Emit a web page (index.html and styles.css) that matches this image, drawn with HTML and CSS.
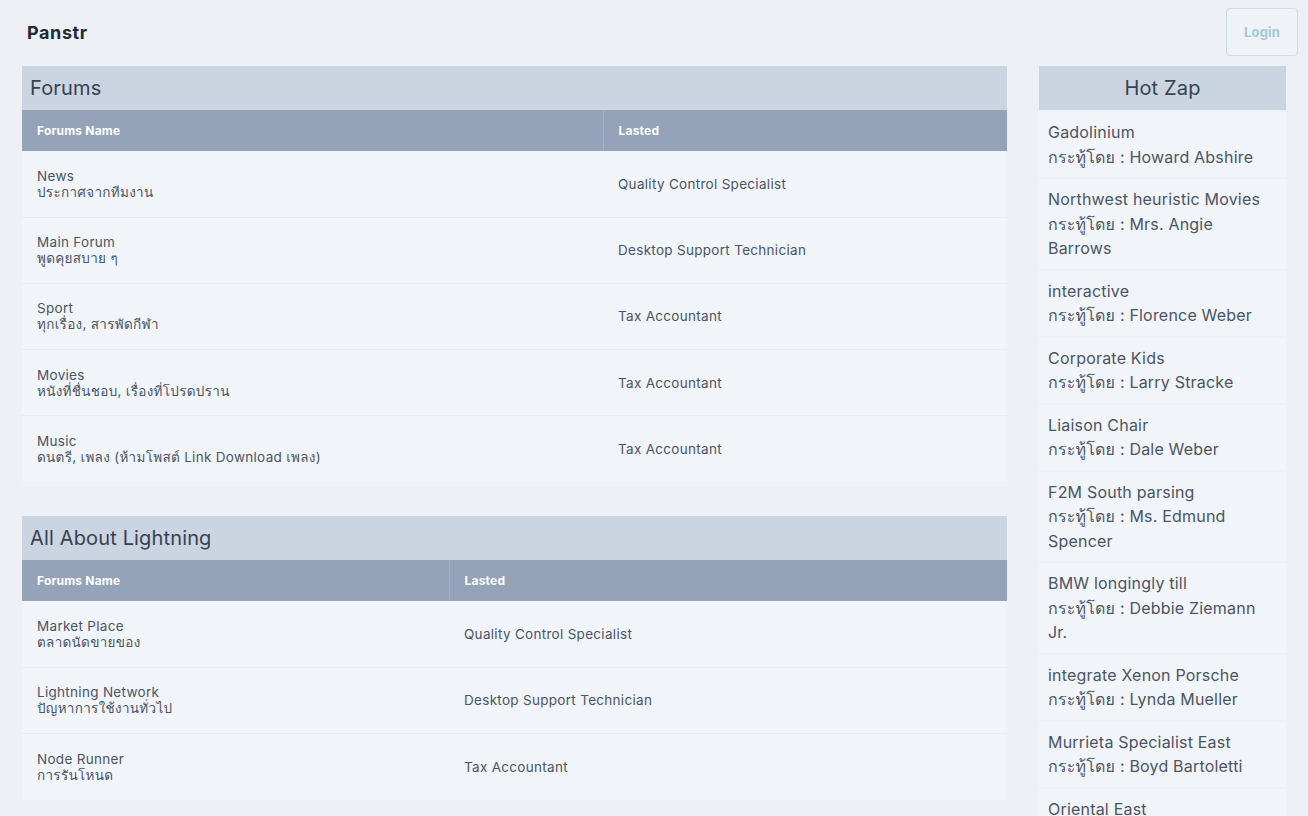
FILE: index.html
```html
<!DOCTYPE html>
<html lang="th">
<head>
<meta charset="utf-8">
<title>Panstr</title>
<link rel="stylesheet" href="styles.css">
</head>
<body>
<div class="app">
  <header class="topbar">
    <div class="brand">Panstr</div>
    <button class="login">Login</button>
  </header>
  <div class="layout">
    <main class="main">
      <section class="panel">
        <h2 class="panel-title">Forums</h2>
        <table class="forum-table">
          <colgroup><col class="col-a1"><col></colgroup>
          <thead><tr><th>Forums Name</th><th>Lasted</th></tr></thead>
          <tbody>
            <tr><td><div class="fname">News</div><div class="fdesc">ประกาศจากทีมงาน</div></td><td>Quality Control Specialist</td></tr>
            <tr><td><div class="fname">Main Forum</div><div class="fdesc">พูดคุยสบาย ๆ</div></td><td>Desktop Support Technician</td></tr>
            <tr><td><div class="fname">Sport</div><div class="fdesc">ทุกเรื่อง, สารพัดกีฬา</div></td><td>Tax Accountant</td></tr>
            <tr><td><div class="fname">Movies</div><div class="fdesc">หนังที่ชื่นชอบ, เรื่องที่โปรดปราน</div></td><td>Tax Accountant</td></tr>
            <tr><td><div class="fname">Music</div><div class="fdesc">ดนตรี, เพลง (ห้ามโพสต์ Link Download เพลง)</div></td><td>Tax Accountant</td></tr>
          </tbody>
        </table>
      </section>
      <section class="panel">
        <h2 class="panel-title">All About Lightning</h2>
        <table class="forum-table">
          <colgroup><col class="col-a2"><col></colgroup>
          <thead><tr><th>Forums Name</th><th>Lasted</th></tr></thead>
          <tbody>
            <tr><td><div class="fname">Market Place</div><div class="fdesc">ตลาดนัดขายของ</div></td><td>Quality Control Specialist</td></tr>
            <tr><td><div class="fname">Lightning Network</div><div class="fdesc">ปัญหาการใช้งานทั่วไป</div></td><td>Desktop Support Technician</td></tr>
            <tr><td><div class="fname">Node Runner</div><div class="fdesc">การรันโหนด</div></td><td>Tax Accountant</td></tr>
          </tbody>
        </table>
      </section>
    </main>
    <aside class="side">
      <h2 class="side-title">Hot Zap</h2>
      <ul class="zap-list">
        <li class="zap">Gadolinium<br>กระทู้โดย : Howard Abshire</li>
        <li class="zap">Northwest heuristic Movies<br>กระทู้โดย : Mrs. Angie Barrows</li>
        <li class="zap">interactive<br>กระทู้โดย : Florence Weber</li>
        <li class="zap">Corporate Kids<br>กระทู้โดย : Larry Stracke</li>
        <li class="zap">Liaison Chair<br>กระทู้โดย : Dale Weber</li>
        <li class="zap">F2M South parsing<br>กระทู้โดย : Ms. Edmund Spencer</li>
        <li class="zap">BMW longingly till<br>กระทู้โดย : Debbie Ziemann Jr.</li>
        <li class="zap">integrate Xenon Porsche<br>กระทู้โดย : Lynda Mueller</li>
        <li class="zap">Murrieta Specialist East<br>กระทู้โดย : Boyd Bartoletti</li>
        <li class="zap">Oriental East<br>กระทู้โดย : Kurt Lind</li>
      </ul>
    </aside>
  </div>
</div>
</body>
</html>
```

FILE: styles.css
```css
* { box-sizing: border-box; }
html, body { margin: 0; padding: 0; }
body {
  background: #edf0f5;
  font-family: "Inter", "Loma", "Garuda", "Waree", "Umpush", "Noto Sans Thai Looped", "Noto Sans Thai", "Noto Sans", sans-serif;
  color: #4b5563;
}
.app { min-height: 816px; }
.topbar {
  display: flex;
  align-items: center;
  justify-content: space-between;
  height: 56px;
  padding: 8px 10px 0 27px;
}
.brand {
  font-size: 18px;
  font-weight: 700;
  letter-spacing: 0.6px;
  color: #1f2937;
}
.login {
  width: 72px;
  height: 48px;
  background: #eff2f6;
  border: 1px solid #cfdbe3;
  border-radius: 4px;
  color: #9fcbd6;
  font-family: inherit;
  font-size: 13px;
  font-weight: 700;
  letter-spacing: 0.2px;
}
.layout {
  display: grid;
  grid-template-columns: 985px 247px;
  column-gap: 32px;
  padding: 10px 22px 0 22px;
  align-items: start;
}
.main { display: flex; flex-direction: column; gap: 34px; }
.panel { background: #f1f4f8; }
.panel-title {
  margin: 0;
  height: 44px;
  line-height: 44px;
  padding-left: 8px;
  background: #cbd5e1;
  font-size: 20px;
  font-weight: 400;
  letter-spacing: 0.15px;
  color: #374151;
}
.forum-table {
  width: 100%;
  border-collapse: collapse;
  table-layout: fixed;
}
.col-a1 { width: 581px; }
.col-a2 { width: 427px; }
.forum-table th {
  background: #94a3b8;
  color: #ffffff;
  font-size: 12px;
  font-weight: 700;
  letter-spacing: 0.2px;
  text-align: left;
  height: 41px;
  padding: 0 15px;
}
.forum-table th + th { border-left: 1px solid #a3b0c2; }
.forum-table td {
  font-size: 13.5px;
  letter-spacing: 0.3px;
  padding: 0 15px;
  height: 66.2px;
  vertical-align: middle;
  border-bottom: 1px solid #e7ebf0;
  color: #4b5563;
}
.forum-table tr:last-child td { border-bottom: none; }
.fname { line-height: 16px; }
.fdesc { line-height: 16px; font-size: 13.5px; }
.side { display: flex; flex-direction: column; }
.side-title {
  margin: 0;
  height: 44px;
  line-height: 44px;
  text-align: center;
  background: #cbd5e1;
  font-size: 20px;
  font-weight: 400;
  letter-spacing: 0.15px;
  color: #374151;
}
.zap-list { list-style: none; margin: 0; padding: 0; }
.zap {
  margin-top: 2px;
  background: #f1f4f8;
  padding: 8px 20px 8px 9px;
  font-size: 16px;
  letter-spacing: 0.2px;
  line-height: 24.5px;
  color: #4b5563;
}
```
